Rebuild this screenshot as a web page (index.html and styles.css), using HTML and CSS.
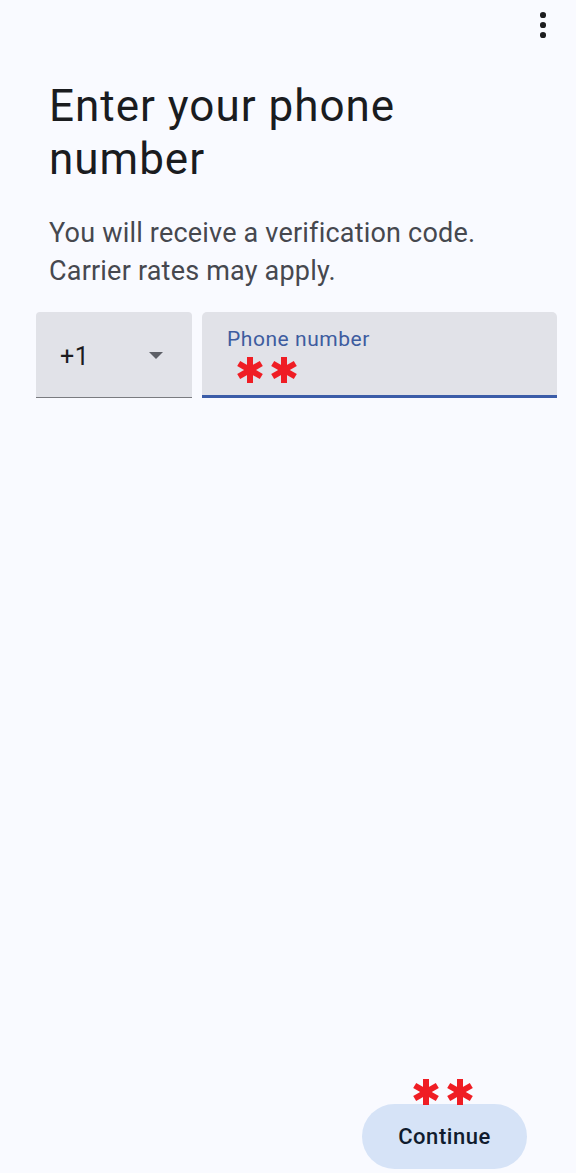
FILE: index.html
```html
<!DOCTYPE html>
<html lang="en">
<head>
<meta charset="utf-8">
<title>Enter your phone number</title>
<link rel="stylesheet" href="styles.css">
</head>
<body>
<div class="page">
  <header class="topbar">
    <button class="menu" aria-label="More options">
      <span class="dot"></span><span class="dot"></span><span class="dot"></span>
    </button>
  </header>
  <main class="content">
    <h1 class="title">Enter your phone number</h1>
    <p class="subtitle">You will receive a verification code. Carrier rates may apply.</p>
    <div class="fields">
      <div class="country">
        <span class="code">+1</span>
        <svg class="caret" width="14" height="7" viewBox="0 0 14 7"><path d="M0 0h14L7 7z" fill="#5d5f66"/></svg>
      </div>
      <div class="phone">
        <span class="label">Phone number</span>
        <span class="marks">
          <svg class="ast" width="26" height="26" viewBox="0 0 26 26"><g stroke="#ef1d24" stroke-width="6"><path d="M13 0v26"/><path d="M1.7 6.5l22.6 13"/><path d="M1.7 19.5l22.6-13"/></g></svg>
          <svg class="ast" width="26" height="26" viewBox="0 0 26 26"><g stroke="#ef1d24" stroke-width="6"><path d="M13 0v26"/><path d="M1.7 6.5l22.6 13"/><path d="M1.7 19.5l22.6-13"/></g></svg>
        </span>
      </div>
    </div>
  </main>
  <footer class="footer">
    <button class="continue">
      <span class="marks over">
        <svg class="ast" width="26" height="26" viewBox="0 0 26 26"><g stroke="#ef1d24" stroke-width="6"><path d="M13 0v26"/><path d="M1.7 6.5l22.6 13"/><path d="M1.7 19.5l22.6-13"/></g></svg>
        <svg class="ast" width="26" height="26" viewBox="0 0 26 26"><g stroke="#ef1d24" stroke-width="6"><path d="M13 0v26"/><path d="M1.7 6.5l22.6 13"/><path d="M1.7 19.5l22.6-13"/></g></svg>
      </span>
      Continue
    </button>
  </footer>
</div>
</body>
</html>
```

FILE: styles.css
```css
* { box-sizing: border-box; }
html, body { margin: 0; padding: 0; }
body {
  background: #f9faff;
  font-family: Roboto, "Noto Sans", sans-serif;
  color: #1a1c20;
}
.page {
  min-height: 1173px;
  display: flex;
  flex-direction: column;
}
.topbar {
  height: 48px;
  display: flex;
  justify-content: flex-end;
  padding: 12px 21px 0 0;
}
.menu {
  border: 0;
  background: none;
  padding: 0;
  width: 24px;
  display: flex;
  flex-direction: column;
  align-items: center;
  gap: 4.5px;
  height: 26px;
}
.dot {
  width: 6px;
  height: 6px;
  border-radius: 50%;
  background: #1d1d20;
}
.content {
  flex: 1;
}
.title {
  margin: 32px 0 0 49px;
  font-size: 44px;
  font-weight: 400;
  line-height: 53px;
  letter-spacing: 1px;
  width: 420px;
  color: #1a1c1f;
}
.subtitle {
  margin: 28px 0 0 49px;
  font-size: 27px;
  line-height: 38px;
  letter-spacing: 0.2px;
  color: #46484f;
  width: 480px;
}
.fields {
  display: flex;
  gap: 10px;
  margin: 22px 19px 0 36px;
}
.country {
  width: 156px;
  height: 86px;
  background: #e1e2e8;
  border-radius: 4px 4px 0 0;
  border-bottom: 1.5px solid #7a7b80;
  display: flex;
  align-items: center;
  padding: 0 29px 0 24px;
  justify-content: space-between;
}
.code {
  font-size: 25px;
  letter-spacing: 0.5px;
  color: #1b1c1f;
  margin-top: 4px;
}
.caret { margin-top: 1px; }
.phone {
  flex: 1;
  height: 86px;
  background: #e1e2e8;
  border-radius: 5px 5px 0 0;
  border-bottom: 3px solid #3b5ca8;
  padding: 15px 0 0 25px;
  display: flex;
  flex-direction: column;
}
.label {
  font-size: 21px;
  line-height: 24px;
  letter-spacing: 0.55px;
  color: #3d5c9f;
}
.marks {
  display: flex;
  gap: 8px;
  margin: 6px 0 0 10px;
}
.ast { width: 26px; height: 26px; }
.footer {
  display: flex;
  justify-content: flex-end;
  padding: 0 49px 4px 0;
}
.continue {
  position: relative;
  width: 165px;
  height: 65px;
  border: 0;
  border-radius: 33px;
  background: #d6e3f7;
  font-family: Roboto, "Noto Sans", sans-serif;
  font-size: 22px;
  font-weight: 500;
  color: #101c2e;
  letter-spacing: 0.55px;
}
.marks.over {
  position: absolute;
  left: 51px;
  top: -25px;
  margin: 0;
}
```
